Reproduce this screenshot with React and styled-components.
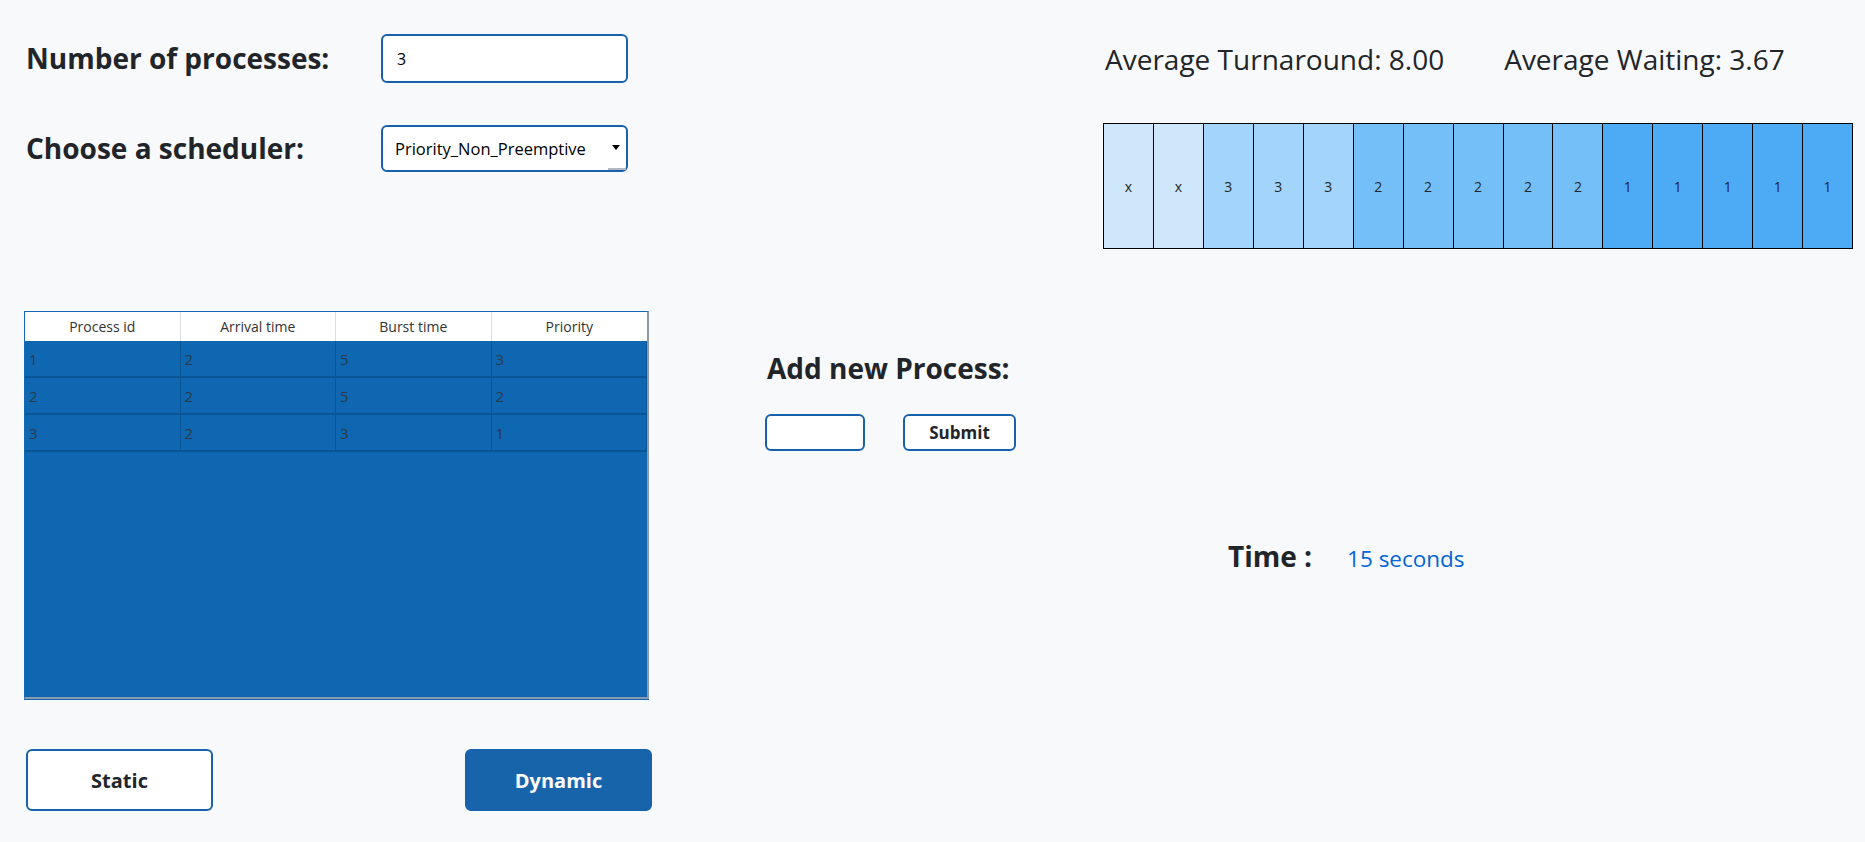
import React from 'react';
import styled, { createGlobalStyle } from 'styled-components';

const GlobalStyle = createGlobalStyle`
  body {
    margin: 0;
    background: #f8f9fa;
    font-family: "Open Sans", "Noto Sans", sans-serif;
    color: #212529;
  }
  * { box-sizing: border-box; }
`;

const Page = styled.div`
  display: flex;
  min-height: 842px;
  padding: 34px 12px 0 24px;
`;

const LeftCol = styled.div`
  width: 629px;
  display: flex;
  flex-direction: column;
`;

const FormRow = styled.div`
  display: grid;
  grid-template-columns: 357px 247px;
  align-items: center;
  margin-top: ${props => props.gap || 0}px;
`;

const Label = styled.h3`
  margin: 0;
  padding-left: 2px;
  font-size: 28px;
  line-height: 1.2;
  font-weight: 700;
`;

const TextInput = styled.input`
  width: ${props => props.w}px;
  height: ${props => props.h}px;
  border: 2px solid #1861ac;
  border-radius: 6px;
  background: #fff;
  padding: 0 14px;
  font-family: inherit;
  font-size: 16px;
  color: #000;
  outline: none;
`;

const SelectWrap = styled.div`
  position: relative;
  width: 247px;
  height: 47px;

  &::after {
    content: '';
    position: absolute;
    right: 8px;
    top: 20px;
    border-left: 4px solid transparent;
    border-right: 4px solid transparent;
    border-top: 5px solid #000;
    pointer-events: none;
  }
  &::before {
    content: '';
    position: absolute;
    right: 2px;
    bottom: 2px;
    width: 18px;
    height: 2px;
    background: #b5b9bf;
  }
`;

const Select = styled.select`
  appearance: none;
  width: 100%;
  height: 100%;
  border: 2px solid #1861ac;
  border-radius: 6px;
  background: #fff;
  padding: 0 12px;
  font-family: inherit;
  font-size: 16.5px;
  color: #000;
  outline: none;
`;

const Grid = styled.div`
  margin-top: 139px;
  width: 625px;
  height: 388px;
  display: flex;
  flex-direction: column;
  border-top: 1px solid #1568b3;
  border-left: 1px solid #1568b3;
  background: #0e67b0;
  border-right: 2px solid #8d99a8;
  border-bottom: 2px solid #8d99a8;
  box-shadow: 0 1px 0 #0e67b0;
`;

const GridRow = styled.div`
  display: grid;
  grid-template-columns: repeat(4, 1fr);
  height: ${props => (props.head ? 29 : 37)}px;
  background: ${props => (props.head ? '#fff' : 'transparent')};
  border-bottom: ${props => (props.head ? 'none' : '2px solid #0a5694')};
`;

const HeadCell = styled.div`
  display: flex;
  align-items: center;
  justify-content: center;
  font-size: 14px;
  color: #333;
  border-right: 1px solid #dcdcdc;
  &:last-child { border-right: none; }
`;

const BodyCell = styled.div`
  display: flex;
  align-items: center;
  padding-left: 4px;
  font-size: 15px;
  color: #2a3a48;
  border-right: 1px solid #0a5694;
`;

const ButtonRow = styled.div`
  margin-top: 50px;
  display: flex;
  justify-content: space-between;
  padding-left: 2px;
`;

const BigButton = styled.button`
  width: 187px;
  height: 62px;
  border-radius: 6px;
  border: 2px solid #1861ac;
  background: ${props => (props.primary ? '#1864ab' : '#fff')};
  color: ${props => (props.primary ? '#fff' : '#212529')};
  font-family: inherit;
  font-weight: 700;
  font-size: 20px;
  cursor: pointer;
`;

const RightCol = styled.div`
  flex: 1;
  display: flex;
  flex-direction: column;
`;

const Stats = styled.div`
  margin-left: 453px;
  height: 49px;
  display: flex;
  align-items: center;
  gap: 60px;
  font-size: 28px;
`;

const Gantt = styled.div`
  margin: 40px 0 0 451px;
  width: 750px;
  height: 126px;
  display: flex;
  border: 1px solid #000;
`;

const GanttCell = styled.div`
  flex: 1;
  display: flex;
  align-items: center;
  justify-content: center;
  font-size: 14px;
  color: #212529;
  background: ${props => props.bg};
  border-right: 1px solid #000;
  &:last-child { border-right: none; }
`;

const AddBlock = styled.div`
  margin: 103px 0 0 113px;
  display: flex;
  flex-direction: column;
`;

const AddRow = styled.div`
  margin-top: 28px;
  display: flex;
  gap: 38px;
`;

const SmallButton = styled.button`
  width: 113px;
  height: 37px;
  border: 2px solid #1861ac;
  border-radius: 6px;
  background: #fff;
  font-family: inherit;
  font-weight: 700;
  font-size: 17px;
  color: #212529;
  cursor: pointer;
`;

const TimeRow = styled.div`
  margin: 89px 0 0 576px;
  display: flex;
  align-items: baseline;
  gap: 35px;
`;

const TimeLabel = styled.span`
  font-size: 28px;
  font-weight: 700;
  line-height: 1.2;
`;

const TimeValue = styled.span`
  font-size: 22.5px;
  color: #0366d6;
`;

const shades = { x: '#cfe7fb', 3: '#a3d4fb', 2: '#75bff8', 1: '#4daaf5' };
const timeline = ['x', 'x', 3, 3, 3, 2, 2, 2, 2, 2, 1, 1, 1, 1, 1];
const processes = [
  { id: 1, arrival: 2, burst: 5, priority: 3 },
  { id: 2, arrival: 2, burst: 5, priority: 2 },
  { id: 3, arrival: 2, burst: 3, priority: 1 },
];

export default function App() {
  return (
    <>
      <GlobalStyle />
      <Page>
        <LeftCol>
          <FormRow>
            <Label>Number of processes:</Label>
            <TextInput w={247} h={49} defaultValue="3" />
          </FormRow>
          <FormRow gap={42}>
            <Label>Choose a scheduler:</Label>
            <SelectWrap>
              <Select defaultValue="Priority_Non_Preemptive">
                <option>FCFS</option>
                <option>Priority_Non_Preemptive</option>
              </Select>
            </SelectWrap>
          </FormRow>
          <Grid>
            <GridRow head>
              <HeadCell>Process id</HeadCell>
              <HeadCell>Arrival time</HeadCell>
              <HeadCell>Burst time</HeadCell>
              <HeadCell>Priority</HeadCell>
            </GridRow>
            {processes.map(p => (
              <GridRow key={p.id}>
                <BodyCell>{p.id}</BodyCell>
                <BodyCell>{p.arrival}</BodyCell>
                <BodyCell>{p.burst}</BodyCell>
                <BodyCell>{p.priority}</BodyCell>
              </GridRow>
            ))}
          </Grid>
          <ButtonRow>
            <BigButton>Static</BigButton>
            <BigButton primary>Dynamic</BigButton>
          </ButtonRow>
        </LeftCol>
        <RightCol>
          <Stats>
            <span>Average Turnaround: 8.00</span>
            <span>Average Waiting: 3.67</span>
          </Stats>
          <Gantt>
            {timeline.map((t, i) => (
              <GanttCell key={i} bg={shades[t]}>{t}</GanttCell>
            ))}
          </Gantt>
          <AddBlock>
            <Label>Add new Process:</Label>
            <AddRow>
              <TextInput w={100} h={37} />
              <SmallButton>Submit</SmallButton>
            </AddRow>
          </AddBlock>
          <TimeRow>
            <TimeLabel>Time :</TimeLabel>
            <TimeValue>15 seconds</TimeValue>
          </TimeRow>
        </RightCol>
      </Page>
    </>
  );
}
